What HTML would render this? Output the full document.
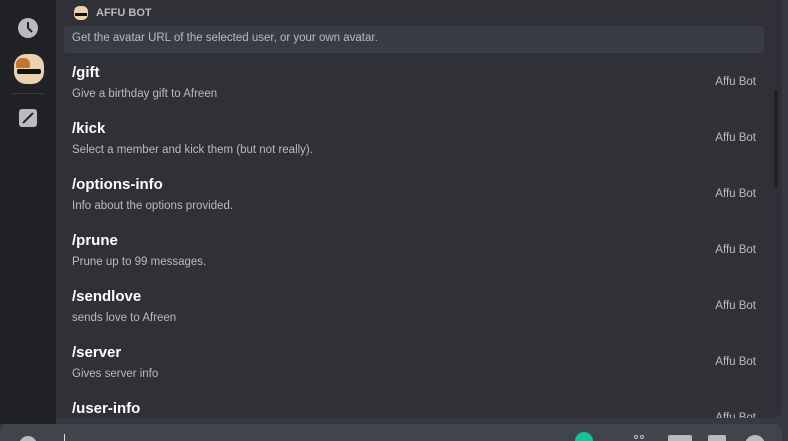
<!DOCTYPE html>
<html><head><style>
*{margin:0;padding:0;box-sizing:border-box}
html,body{width:788px;height:441px;overflow:hidden}
body{background:#36393f;font-family:"Liberation Sans",sans-serif;position:relative}
#side{position:absolute;left:0;top:0;width:56px;height:424px;background:#202225}
#main{position:absolute;left:56px;top:0;width:726px;height:418px;background:#2f3136;border-radius:0 0 8px 0}
.row{position:absolute;left:8px;width:700px;height:56px}
.t{position:absolute;left:8px;top:8px;color:#fff;font-size:15px;font-weight:bold}
.d{position:absolute;left:8px;top:32px;color:#b9bbbe;font-size:11.5px}
.b{position:absolute;right:8px;top:20px;color:#b9bbbe;font-size:11.5px}
#bar{position:absolute;left:0;top:424px;width:782px;height:17px;background:#40444b;border-radius:8px 8px 0 0;overflow:hidden}
</style></head><body>
<div id="side">
<svg style="position:absolute;left:17px;top:17px" width="22" height="22" viewBox="0 0 22 22"><circle cx="11" cy="11" r="10" fill="#b9bbbe"/><path d="M11 5v6l4 4" stroke="#202225" stroke-width="2" fill="none"/></svg>
<div style="position:absolute;left:14px;top:54px;width:30px;height:30px;border-radius:40%;background:#e8d2b0"><div style="position:absolute;left:2px;top:4px;width:14px;height:10px;background:#c8742e;border-radius:6px 6px 2px 2px"></div><div style="position:absolute;left:3px;top:15px;width:24px;height:5px;background:#111;border-radius:2px"></div></div>
<div style="position:absolute;left:12px;top:93px;width:32px;height:1px;background:#36393f"></div>
<div style="position:absolute;left:19px;top:109px;width:18px;height:18px;background:#b9bbbe;border-radius:3px"><div style="position:absolute;left:8px;top:2px;width:2px;height:14px;background:#202225;transform:rotate(45deg)"></div></div>
</div>
<div id="main">
<div style="position:absolute;left:18px;top:6px;width:14px;height:14px;border-radius:40%;background:#e8d2b0"><div style="position:absolute;left:1px;top:7px;width:12px;height:3px;background:#111"></div></div>
<div style="position:absolute;left:40px;top:7px;color:#b9bbbe;font-size:11px;font-weight:bold">AFFU BOT</div>
<div style="position:absolute;left:8px;top:26px;width:700px;height:27px;background:#393c43;border-radius:3px"><div style="position:absolute;left:8px;top:6px;color:#b9bbbe;font-size:11.5px">Get the avatar URL of the selected user, or your own avatar.</div><div style="position:absolute;right:8px;top:-9px;color:#b9bbbe;font-size:11.5px;clip-path:inset(9px 0 0 0)">Affu Bot</div></div>
<div class="row" style="top:56px"><div class="t">/gift</div><div class="d">Give a birthday gift to Afreen</div><div class="b">Affu Bot</div></div>
<div class="row" style="top:112px"><div class="t">/kick</div><div class="d">Select a member and kick them (but not really).</div><div class="b">Affu Bot</div></div>
<div class="row" style="top:168px"><div class="t">/options-info</div><div class="d">Info about the options provided.</div><div class="b">Affu Bot</div></div>
<div class="row" style="top:224px"><div class="t">/prune</div><div class="d">Prune up to 99 messages.</div><div class="b">Affu Bot</div></div>
<div class="row" style="top:280px"><div class="t">/sendlove</div><div class="d">sends love to Afreen</div><div class="b">Affu Bot</div></div>
<div class="row" style="top:336px"><div class="t">/server</div><div class="d">Gives server info</div><div class="b">Affu Bot</div></div>
<div class="row" style="top:392px;height:26px;overflow:hidden"><div class="t">/user-info</div><div class="b">Affu Bot</div></div>
<div style="position:absolute;left:718px;top:90px;width:4px;height:98px;background:#202225;border-radius:2px"></div>
</div>
<div id="bar">
<div style="position:absolute;left:19px;top:12px;width:18px;height:18px;border-radius:50%;background:#b9bbbe"></div>
<div style="position:absolute;left:64px;top:10px;width:1px;height:10px;background:#dcddde"></div>
<div style="position:absolute;left:575px;top:8px;width:18px;height:18px;border-radius:50%;background:#15c39a"></div>
<div style="position:absolute;left:634px;top:11px;width:4px;height:4px;border:1px solid #b9bbbe;border-radius:50%"></div>
<div style="position:absolute;left:640px;top:11px;width:4px;height:4px;border:1px solid #b9bbbe;border-radius:50%"></div>
<div style="position:absolute;left:668px;top:11px;width:24px;height:14px;background:#b9bbbe;border-radius:2px"></div>
<div style="position:absolute;left:708px;top:11px;width:18px;height:14px;background:#b9bbbe;border-radius:2px"></div>
<div style="position:absolute;left:745px;top:11px;width:20px;height:20px;border-radius:50%;background:#b9bbbe"></div>
</div>
</body></html>
